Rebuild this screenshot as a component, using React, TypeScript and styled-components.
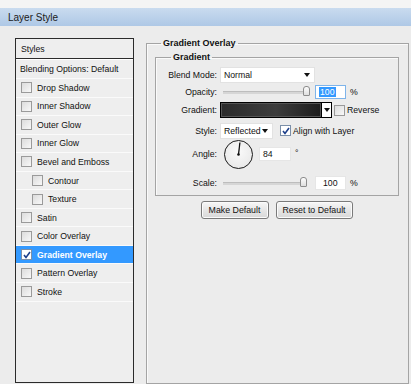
import React from 'react';
import styled, { createGlobalStyle } from 'styled-components';

const GlobalStyle = createGlobalStyle`
  html, body {
    margin: 0;
    padding: 0;
    background: #f4f4f4;
  }
  body {
    font-family: 'Liberation Sans', Arial, sans-serif;
    font-size: 8.7px;
    color: #111;
  }
`;

const Window = styled.div`
  width: 411px;
  height: 384px;
  overflow: hidden;
  display: flex;
  flex-direction: column;
  padding-top: 8px;
  box-sizing: border-box;
  background: linear-gradient(#f4f4f4 0 8px, #ececec 8px);
`;

const TitleBar = styled.div`
  height: 18px;
  display: flex;
  align-items: center;
  padding-left: 8px;
  font-size: 10px;
  color: #1a1a1a;
  background: linear-gradient(#c9dbef, #aec8e6);
`;

const Body = styled.div`
  flex: 1;
  display: flex;
  padding: 12px 2px 0 15px;
  gap: 12px;
  min-height: 0;
`;

const StylesPanel = styled.div`
  width: 119px;
  box-sizing: border-box;
  border: 1px solid #2b2b2b;
  background: #eeeeee;
  display: flex;
  flex-direction: column;
  margin-bottom: 1px;
`;

const PanelHeader = styled.div`
  height: 19px;
  display: flex;
  align-items: center;
  padding-left: 5px;
  border-bottom: 1px solid #2b2b2b;
  box-shadow: 0 1px 0 #fff;
  margin-bottom: 1px;
`;

const BlendRow = styled.div`
  height: 18px;
  display: flex;
  align-items: center;
  padding-left: 4px;
  border-bottom: 1px solid #fafafa;
`;

const EffectRow = styled.div<{ $indent?: boolean; $active?: boolean }>`
  height: 18.55px;
  box-sizing: border-box;
  display: flex;
  align-items: center;
  gap: 5px;
  padding-left: ${({ $indent }) => ($indent ? '16px' : '5px')};
  border-bottom: 1px solid #fafafa;
  background: ${({ $active }) => ($active ? '#3399ff' : 'transparent')};
  color: ${({ $active }) => ($active ? '#fff' : '#111')};
  font-weight: ${({ $active }) => ($active ? 'bold' : 'normal')};
`;

const Box = styled.span<{ $checked?: boolean }>`
  width: 9px;
  height: 9px;
  flex: none;
  border: 1px solid #9a9a9a;
  background: linear-gradient(135deg, #dcdcdc, #f8f8f8);
  display: inline-flex;
  align-items: center;
  justify-content: center;
  ${({ $checked }) => $checked && 'background: #fff; border-color: #7b8fa8;'}
`;

const Check: React.FC<{ checked?: boolean }> = ({ checked }) => (
  <Box $checked={checked}>
    {checked && (
      <svg width="8" height="8" viewBox="0 0 8 8">
        <path d="M1 4 L3 6.5 L7 1" fill="none" stroke="#1d3f8a" strokeWidth="1.6" />
      </svg>
    )}
  </Box>
);

const Outer = styled.fieldset`
  flex: 1;
  margin: 0;
  padding: 0 10px 0 8px;
  border: 1px solid #a4a4a4;
  box-shadow: inset 1px 1px 0 #fafafa;
  min-width: 0;
  display: flex;
  flex-direction: column;
`;

const Legend = styled.legend<{ $inset: number }>`
  margin-left: ${({ $inset }) => $inset}px;
  padding: 0 2px;
  font-weight: bold;
  font-size: 9px;
  line-height: 11px;
`;

const Inner = styled.fieldset`
  margin: 3px 0 0 0;
  padding: 3px 0 4px 0;
  border: 1px solid #a4a4a4;
  box-shadow: inset 1px 1px 0 #fafafa;
  display: flex;
  flex-direction: column;
  width: 244px;
  box-sizing: border-box;
`;

const Row = styled.div<{ $h: number; $mt?: number }>`
  height: ${({ $h }) => $h}px;
  margin-top: ${({ $mt }) => $mt ?? 0}px;
  display: flex;
  align-items: center;
`;

const Label = styled.span`
  width: 61px;
  text-align: right;
  margin-right: 3px;
  flex: none;
`;

const Select = styled.div<{ $w: number }>`
  width: ${({ $w }) => $w}px;
  height: 16px;
  box-sizing: border-box;
  background: #fff;
  border: 1px solid #e2e2e2;
  display: flex;
  align-items: center;
  justify-content: space-between;
  padding: 0 4px 0 3px;
`;

const Arrow = styled.span`
  width: 0;
  height: 0;
  border-left: 3.5px solid transparent;
  border-right: 3.5px solid transparent;
  border-top: 4px solid #111;
`;

const Track = styled.div<{ $w: number }>`
  width: ${({ $w }) => $w}px;
  height: 2px;
  background: #d6d6d6;
  border-top: 1px solid #bdbdbd;
  position: relative;
  margin-left: 3px;
  margin-right: 10px;
`;

const Thumb = styled.span<{ $x: number }>`
  position: absolute;
  left: ${({ $x }) => $x}px;
  top: -6px;
  width: 5px;
  height: 8px;
  border: 1px solid #8c8c8c;
  border-radius: 3px 3px 1px 1px;
  background: linear-gradient(#fdfdfd, #dedede);
`;

const NumInput = styled.div<{ $w: number; $focus?: boolean; $pad?: number }>`
  width: ${({ $w }) => $w}px;
  height: 14px;
  box-sizing: border-box;
  background: #fff;
  border: 1px solid ${({ $focus }) => ($focus ? '#7eb4ea' : '#e6e6e6')};
  display: flex;
  align-items: center;
  padding-left: ${({ $pad }) => $pad ?? 3}px;
`;

const Selected = styled.span`
  background: #3399ff;
  color: #fff;
  padding: 0 1px;
`;

const Unit = styled.span<{ $raised?: boolean }>`
  margin-left: 4px;
  ${({ $raised }) => $raised && 'align-self: flex-start; margin-top: 9px;'}
`;

const Swatch = styled.div`
  width: 102px;
  height: 16px;
  box-sizing: border-box;
  border: 1px solid #000;
  background: linear-gradient(90deg, #2b2b2b, #3d3d3d 55%, #1c1c1c);
  box-shadow: inset 0 0 0 1px #555;
`;

const SwatchDrop = styled.div`
  width: 10px;
  height: 16px;
  box-sizing: border-box;
  border: 1px solid #000;
  border-left: none;
  background: #fff;
  display: flex;
  align-items: center;
  justify-content: center;
  margin-right: 2px;
`;

const CheckLabel = styled.label<{ $ml?: number }>`
  display: flex;
  align-items: center;
  gap: 2px;
  margin-left: ${({ $ml }) => $ml ?? 0}px;
`;

const Dial = styled.div`
  width: 27px;
  height: 27px;
  border-radius: 50%;
  border: 1.5px solid #1a1a1a;
  background: radial-gradient(circle at 50% 40%, #fafafa, #e4e4e4);
  margin: 0 6px 0 4px;
  flex: none;
`;

const Buttons = styled.div`
  display: flex;
  justify-content: center;
  gap: 7px;
  margin-top: 5px;
`;

const Button = styled.button<{ $w: number }>`
  width: ${({ $w }) => $w}px;
  height: 18px;
  font-family: inherit;
  font-size: 8.8px;
  color: #111;
  border: 1px solid #7a7a7a;
  border-radius: 3px;
  background: linear-gradient(#f7f7f7, #e6e6e6 50%, #d8d8d8);
  box-shadow: inset 0 0 0 1px #fbfbfb;
  padding: 0;
`;

const effects: { name: string; indent?: boolean; active?: boolean }[] = [
  { name: 'Drop Shadow' },
  { name: 'Inner Shadow' },
  { name: 'Outer Glow' },
  { name: 'Inner Glow' },
  { name: 'Bevel and Emboss' },
  { name: 'Contour', indent: true },
  { name: 'Texture', indent: true },
  { name: 'Satin' },
  { name: 'Color Overlay' },
  { name: 'Gradient Overlay', active: true },
  { name: 'Pattern Overlay' },
  { name: 'Stroke' },
];

const App: React.FC = () => (
  <>
    <GlobalStyle />
    <Window>
      <TitleBar>Layer Style</TitleBar>
      <Body>
        <StylesPanel>
          <PanelHeader>Styles</PanelHeader>
          <BlendRow>Blending Options: Default</BlendRow>
          {effects.map((e) => (
            <EffectRow key={e.name} $indent={e.indent} $active={e.active}>
              <Check checked={e.active} />
              {e.name}
            </EffectRow>
          ))}
        </StylesPanel>

        <Outer>
          <Legend $inset={6}>Gradient Overlay</Legend>
          <Inner>
            <Legend $inset={15}>Gradient</Legend>
            <Row $h={17}>
              <Label>Blend Mode:</Label>
              <Select $w={95}>
                Normal
                <Arrow />
              </Select>
            </Row>
            <Row $h={18}>
              <Label>Opacity:</Label>
              <Track $w={82}>
                <Thumb $x={80} />
              </Track>
              <NumInput $w={31} $focus>
                <Selected>100</Selected>
              </NumInput>
              <Unit>%</Unit>
            </Row>
            <Row $h={18}>
              <Label>Gradient:</Label>
              <Swatch />
              <SwatchDrop>
                <Arrow />
              </SwatchDrop>
              <CheckLabel>
                <Check />
                Reverse
              </CheckLabel>
            </Row>
            <Row $h={17} $mt={3}>
              <Label>Style:</Label>
              <Select $w={53}>
                Reflected
                <Arrow />
              </Select>
              <CheckLabel $ml={7}>
                <Check checked />
                Align with Layer
              </CheckLabel>
            </Row>
            <Row $h={30}>
              <Label>Angle:</Label>
              <Dial>
                <svg width="27" height="27" viewBox="0 0 27 27">
                  <line x1="13.5" y1="13.5" x2="14.9" y2="1.5" stroke="#111" strokeWidth="1.3" />
                  <circle cx="13.5" cy="13.5" r="1.3" fill="#111" />
                </svg>
              </Dial>
              <NumInput $w={32}>84</NumInput>
              <Unit $raised>°</Unit>
            </Row>
            <Row $h={16} $mt={6}>
              <Label>Scale:</Label>
              <Track $w={82}>
                <Thumb $x={77} />
              </Track>
              <NumInput $w={31} $pad={7}>100</NumInput>
              <Unit>%</Unit>
            </Row>
          </Inner>
          <Buttons>
            <Button $w={68}>Make Default</Button>
            <Button $w={77}>Reset to Default</Button>
          </Buttons>
        </Outer>
      </Body>
    </Window>
  </>
);

export default App;
